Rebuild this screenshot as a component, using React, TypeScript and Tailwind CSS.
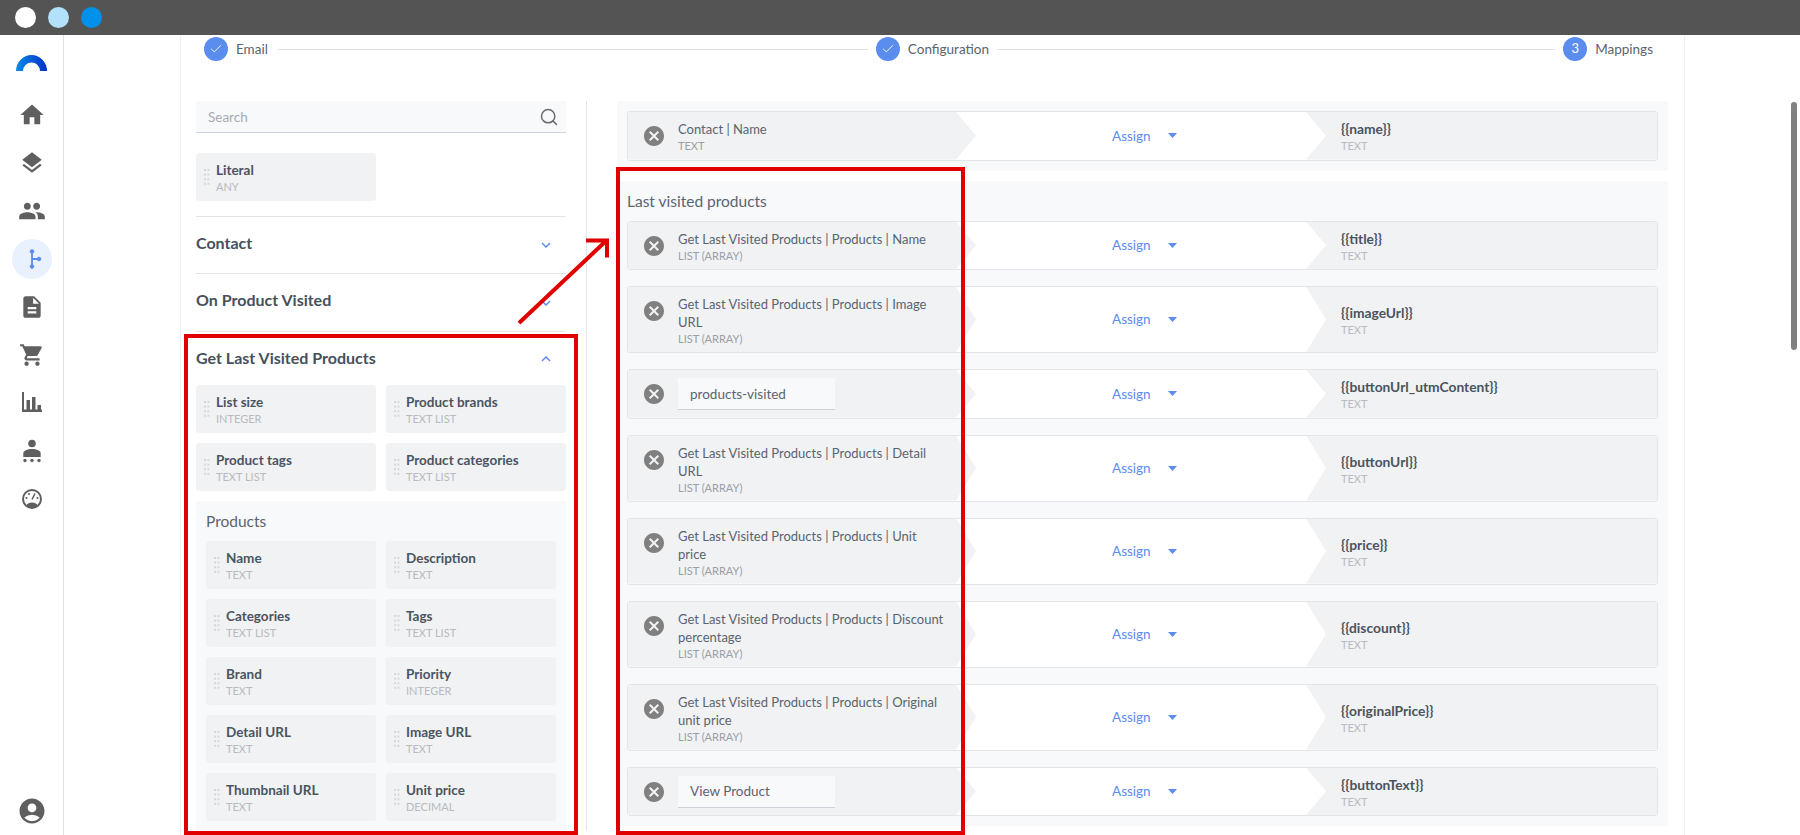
import { Check, Search } from "lucide-react";
import {
  MdAccountCircle,
  MdCancel,
  MdDescription,
  MdHome,
  MdLayers,
  MdPeople,
  MdShoppingCart,
} from "react-icons/md";

const FONT = "font-['Lato','Noto_Sans',sans-serif]";

function Grip() {
  const dots = [];
  for (let r = 0; r < 4; r++) {
    for (let c = 0; c < 2; c++) {
      dots.push(<rect key={`${r}-${c}`} x={c * 3.4} y={r * 4.6} width="2" height="2" />);
    }
  }
  return (
    <svg width="6" height="16" viewBox="0 0 6 16" className="mr-[6px] shrink-0 fill-[#d5d8dc]">
      {dots}
    </svg>
  );
}

function FieldCard({ title, type }: { title: string; type: string }) {
  return (
    <div className="flex h-12 items-center rounded-[3px] bg-[#f1f2f4] pl-2">
      <Grip />
      <div>
        <div className="text-[13.5px] leading-[18px] font-bold text-[#4a5460]">{title}</div>
        <div className="text-[11px] leading-[15px] text-[#b7babf]">{type}</div>
      </div>
    </div>
  );
}

function Chevron({ up }: { up?: boolean }) {
  return (
    <svg width="10" height="6" viewBox="0 0 10 6" className="mr-[15px] fill-none stroke-[#5b8def] stroke-[1.5]">
      <path d={up ? "M1 5l4-4 4 4" : "M1 1l4 4 4-4"} />
    </svg>
  );
}

function AccordionHeader({ title, up, className }: { title: string; up?: boolean; className: string }) {
  return (
    <div className={`flex items-center justify-between ${className}`}>
      <span className={`text-[16px] font-bold text-[#46505c] ${up ? "pb-[2px]" : "pb-[5px]"}`}>{title}</span>
      <Chevron up={up} />
    </div>
  );
}

type Mapping = { source?: string; literal?: string; sourceType?: string; target: string };

function MappingRow({ source, literal, sourceType, target }: Mapping) {
  return (
    <div className="flex min-h-[49.5px] rounded-[3px] border border-[#e3e5e8] bg-white">
      <div className="flex w-[348px] shrink-0 items-start bg-[#f1f2f4] pt-[8px] pb-[6px] pl-[14px] [clip-path:polygon(0_0,calc(100%-20px)_0,100%_50%,calc(100%-20px)_100%,0_100%)]">
        <MdCancel size={24} className="mt-[4px] mr-[12px] shrink-0 text-[#808080]" />
        {literal ? (
          <div className="flex h-8 w-[157px] items-center border-b border-[#ced2d8] bg-[#f8f9fb] pt-px pl-3 text-[13.5px] text-[#5a6470]">
            {literal}
          </div>
        ) : (
          <div className="w-[268px]">
            <div className="text-[13px] leading-[18px] text-[#5a6470]">{source}</div>
            <div className="text-[11px] leading-[15px] text-[#9b9fa5]">{sourceType}</div>
          </div>
        )}
      </div>
      <div className="flex flex-1 items-center pl-[136px]">
        <span className="text-[13.5px] text-[#5b8def]">Assign</span>
        <svg width="9" height="5" viewBox="0 0 9 5" className="ml-[17px] fill-[#5b8def]">
          <path d="M0 0h9L4.5 5z" />
        </svg>
      </div>
      <div className="flex w-[351px] shrink-0 items-center bg-[#f1f2f4] pt-[2px] pl-[35px] [clip-path:polygon(0_0,100%_0,100%_100%,0_100%,20px_50%)]">
        <div>
          <div className="text-[13.8px] leading-[18px] font-bold text-[#4a5460]">{target}</div>
          <div className="text-[11px] leading-[15px] text-[#b7babf]">TEXT</div>
        </div>
      </div>
    </div>
  );
}

function Step({ label, num }: { label: string; num?: string }) {
  return (
    <>
      <div className="flex size-6 shrink-0 items-center justify-center rounded-full bg-[#5b8def] text-[13px] text-white">
        {num ?? <Check size={14} strokeWidth={1.5} />}
      </div>
      <span className="ml-2 text-[13.5px] text-[#5a6470]">{label}</span>
    </>
  );
}

const productFields = [
  ["Name", "TEXT"],
  ["Description", "TEXT"],
  ["Categories", "TEXT LIST"],
  ["Tags", "TEXT LIST"],
  ["Brand", "TEXT"],
  ["Priority", "INTEGER"],
  ["Detail URL", "TEXT"],
  ["Image URL", "TEXT"],
  ["Thumbnail URL", "TEXT"],
  ["Unit price", "DECIMAL"],
];

const lastVisited: Mapping[] = [
  { source: "Get Last Visited Products | Products | Name", sourceType: "LIST (ARRAY)", target: "{{title}}" },
  { source: "Get Last Visited Products | Products | Image URL", sourceType: "LIST (ARRAY)", target: "{{imageUrl}}" },
  { literal: "products-visited", target: "{{buttonUrl_utmContent}}" },
  { source: "Get Last Visited Products | Products | Detail URL", sourceType: "LIST (ARRAY)", target: "{{buttonUrl}}" },
  { source: "Get Last Visited Products | Products | Unit price", sourceType: "LIST (ARRAY)", target: "{{price}}" },
  { source: "Get Last Visited Products | Products | Discount percentage", sourceType: "LIST (ARRAY)", target: "{{discount}}" },
  { source: "Get Last Visited Products | Products | Original unit price", sourceType: "LIST (ARRAY)", target: "{{originalPrice}}" },
  { literal: "View Product", target: "{{buttonText}}" },
];

function Sidebar() {
  const item = "flex h-12 items-center justify-center text-[#5f5f5f]";
  return (
    <aside className="flex w-16 shrink-0 flex-col border-r border-[#e0e0e0] pt-5">
      <svg width="31" height="16" viewBox="0 0 31 16" className="mx-auto mb-5 shrink-0">
        <defs>
          <linearGradient id="logo" x1="0" x2="1" y1="0" y2="0">
            <stop offset="0" stopColor="#0b8be8" />
            <stop offset="1" stopColor="#0030c8" />
          </linearGradient>
        </defs>
        <path d="M0 16a15.5 16 0 0 1 31 0h-7a8 8 0 0 0-17 0z" fill="url(#logo)" />
      </svg>
      <div className={item}><MdHome size={28} /></div>
      <div className={item}><MdLayers size={26} /></div>
      <div className={item}><MdPeople size={28} /></div>
      <div className={item}>
        <div className="flex size-10 items-center justify-center rounded-full bg-[#e8f1fd]">
          <svg width="24" height="24" viewBox="0 0 24 24" className="fill-[#5b8def] stroke-[#5b8def]">
            <path d="M12 4v16M12 12h7" strokeWidth="1.8" fill="none" />
            <circle cx="12" cy="4.5" r="1.8" />
            <circle cx="19" cy="12" r="1.8" />
            <circle cx="12" cy="19.5" r="1.8" />
          </svg>
        </div>
      </div>
      <div className={item}><MdDescription size={26} /></div>
      <div className={item}><MdShoppingCart size={26} /></div>
      <div className={item}>
        <svg width="24" height="24" viewBox="0 0 24 24" fill="currentColor">
          <path d="M2 1h2v17.500h18V21H2zM6.500 9H10v9.500H6.500zM12 6h3.500v12.500H12zM17.500 14H21v4.500h-3.500z" />
        </svg>
      </div>
      <div className={item}>
        <svg width="24" height="24" viewBox="0 0 24 24" fill="currentColor">
          <circle cx="12" cy="4.500" r="3.800" />
          <path d="M3.300 18v-3.500c0-3 4-4.500 8.700-4.500s8.700 1.500 8.700 4.500V18z" />
          <circle cx="5" cy="21.500" r="1.700" />
          <circle cx="12" cy="21.500" r="1.700" />
          <circle cx="19" cy="21.500" r="1.700" />
        </svg>
      </div>
      <div className={item}>
        <svg width="24" height="24" viewBox="0 0 24 24" fill="currentColor">
          <circle cx="12" cy="12" r="9" fill="none" stroke="currentColor" strokeWidth="2" />
          <path d="M6 18.500a7 6 0 0 1 12 0 9 9 0 0 1-12 0z" />
          <path d="M12 12.500l3-6" stroke="currentColor" strokeWidth="1.600" />
          <circle cx="6.500" cy="11" r="1.100" />
          <circle cx="9" cy="7" r="1.100" />
          <circle cx="17.500" cy="11" r="1.100" />
        </svg>
      </div>
      <div className={`${item} mt-auto`}><MdAccountCircle size={24} className="scale-125" /></div>
    </aside>
  );
}

export default function App() {
  return (
    <div className={`relative flex h-[835px] flex-col overflow-hidden bg-white ${FONT}`}>
      {/* window bar */}
      <div className="flex h-[35px] shrink-0 items-center gap-[12px] bg-[#545454] pl-[15px]">
        <div className="size-[21px] rounded-full bg-white" />
        <div className="size-[21px] rounded-full bg-[#b3e0fa]" />
        <div className="size-[21px] rounded-full bg-[#0091ea]" />
      </div>

      <div className="flex min-h-0 flex-1">
        <Sidebar />
        <main className="min-w-0 flex-1 pl-[116px]">
          <div className="h-full w-[1505px] border-x border-[#eef0f2] px-[15px]">
            {/* stepper */}
            <div className="flex items-center pt-[2px] pr-[16px] pl-2">
              <Step label="Email" />
              <div className="mr-2 ml-[10px] h-px w-[590px] bg-[#dfe2e6]" />
              <Step label="Configuration" />
              <div className="mx-2 h-px flex-1 bg-[#dfe2e6]" />
              <Step label="Mappings" num="3" />
            </div>

            <div className="mt-10 flex">
              {/* left column */}
              <div className="w-[370px] shrink-0">
                <div className="flex h-8 items-center justify-between border-b border-[#cdd3de] bg-[#f8f9fb] pr-[7px] pl-3">
                  <span className="pt-[2px] text-[13.5px] text-[#a6abb2]">Search</span>
                  <Search size={20} strokeWidth={1.8} className="text-[#6b6b6b]" />
                </div>
                <div className="mt-5 w-[180px]">
                  <FieldCard title="Literal" type="ANY" />
                </div>
                <AccordionHeader title="Contact" className="mt-[15px] h-[58px] border-y border-[#e3e5e8]" />
                <AccordionHeader title="On Product Visited" className="h-[58px] border-b border-[#e3e5e8]" />
                <AccordionHeader title="Get Last Visited Products" up className="h-[53px]" />
                <div className="grid grid-cols-2 gap-[10px]">
                  <FieldCard title="List size" type="INTEGER" />
                  <FieldCard title="Product brands" type="TEXT LIST" />
                  <FieldCard title="Product tags" type="TEXT LIST" />
                  <FieldCard title="Product categories" type="TEXT LIST" />
                </div>
                <div className="mt-[10px] bg-[#f8f9fb] px-[10px] pb-[10px]">
                  <div className="flex h-10 items-center pt-[2px] text-[15.5px] text-[#5a6470]">Products</div>
                  <div className="grid grid-cols-2 gap-[10px]">
                    {productFields.map(([title, type]) => (
                      <FieldCard key={title} title={title} type={type} />
                    ))}
                  </div>
                </div>
              </div>

              {/* right column */}
              <div className="ml-5 min-w-0 flex-1 border-l border-[#e3e5e8] pl-[30px]">
                <div className="w-[1051px] bg-[#f8f9fb] p-[10px]">
                  <MappingRow source="Contact | Name" sourceType="TEXT" target="{{name}}" />
                </div>
                <div className="mt-[10px] w-[1051px] bg-[#f8f9fb] px-[10px] pb-[10px]">
                  <div className="flex h-10 items-center pt-[2px] text-[15.5px] text-[#5a6470]">Last visited products</div>
                  <div className="flex flex-col gap-4">
                    {lastVisited.map((m) => (
                      <MappingRow key={m.target} {...m} />
                    ))}
                  </div>
                </div>
              </div>
            </div>
          </div>
        </main>
      </div>

      {/* annotations drawn on top of the screenshot */}
      <div className="absolute top-[334px] left-[184px] h-[501px] w-[394px] border-4 border-[#e00000]" />
      <div className="absolute top-[167px] left-[616px] h-[668px] w-[349px] border-4 border-[#e00000]" />
      <svg width="1800" height="835" className="pointer-events-none absolute inset-0 fill-none stroke-[#e00000] stroke-[4]">
        <path d="M519 323L607 240M586 240.500h21v17" />
      </svg>

      {/* page scrollbar */}
      <div className="absolute top-[102px] right-[3px] h-[248px] w-[6px] rounded-full bg-[#808080]" />
    </div>
  );
}
